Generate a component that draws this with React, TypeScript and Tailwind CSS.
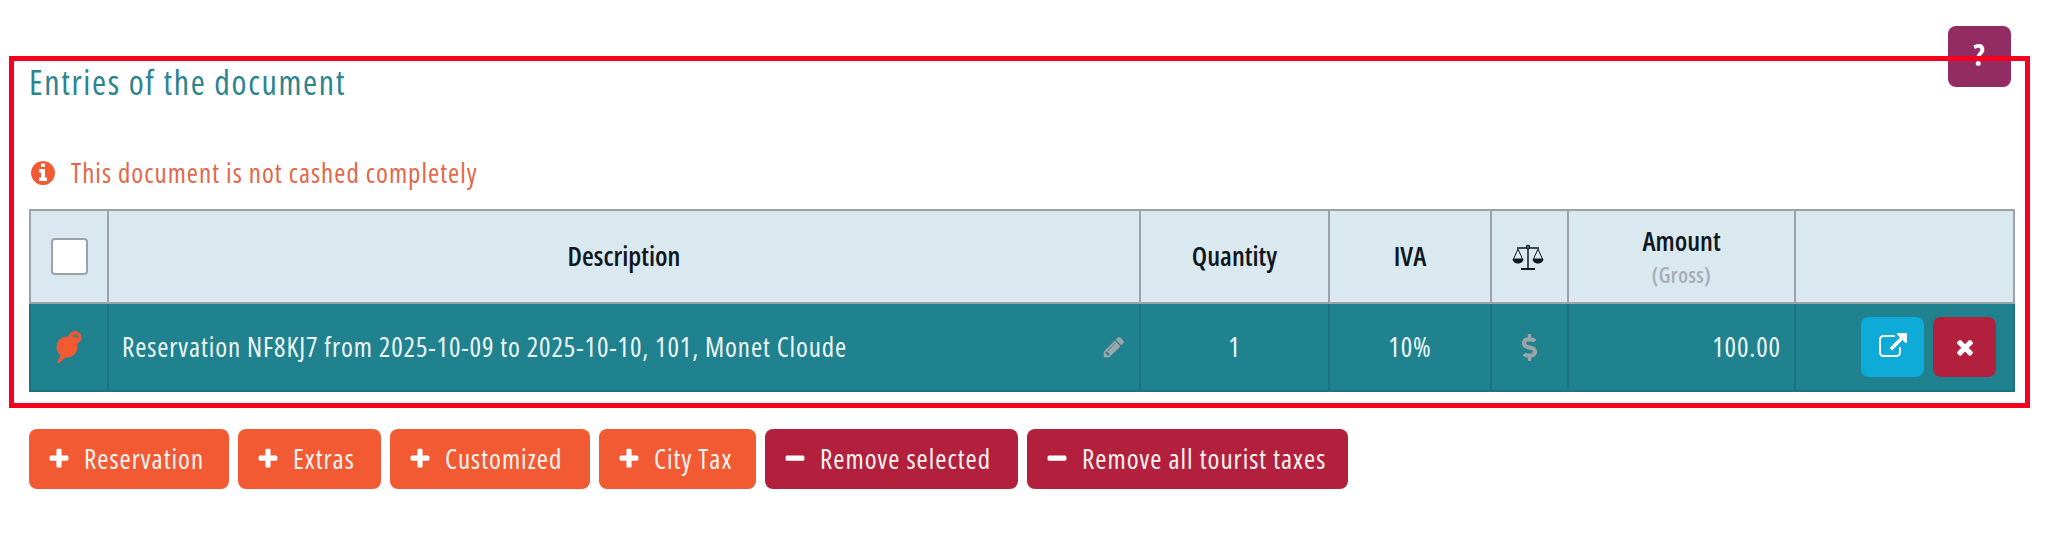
import { FaDollarSign } from "react-icons/fa";

const PLUS =
  "M1600 736v192q0 40-28 68t-68 28h-416v416q0 40-28 68t-68 28h-192q-40 0-68-28t-28-68v-416h-416q-40 0-68-28t-28-68v-192q0-40 28-68t68-28h416v-416q0-40 28-68t68-28h192q40 0 68 28t28 68v416h416q40 0 68 28t28 68z";
const MINUS =
  "M1600 736v192q0 40-28 68t-68 28h-1216q-40 0-68-28t-28-68v-192q0-40 28-68t68-28h1216q40 0 68 28t28 68z";
const TIMES =
  "M1490 1322q0 40-28 68l-136 136q-28 28-68 28t-68-28l-294-294-294 294q-28 28-68 28t-68-28l-136-136q-28-28-28-68t28-68l294-294-294-294q-28-28-28-68t28-68l136-136q28-28 68-28t68 28l294 294 294-294q28-28 68-28t68 28l136 136q28 28 28 68t-28 68l-294 294 294 294q28 28 28 68z";
const LINK =
  "M1408 928v320q0 119-84.500 203.500t-203.500 84.500h-832q-119 0-203.500-84.500t-84.500-203.500v-832q0-119 84.500-203.500t203.500-84.500h704q14 0 23 9t9 23v64q0 14-9 23t-23 9h-704q-66 0-113 47t-47 113v832q0 66 47 113t113 47h832q66 0 113-47t47-113v-320q0-14 9-23t23-9h64q14 0 23 9t9 23zm384-864v512q0 26-19 45t-45 19-45-19l-176-176-652 652q-10 10-23 10t-23-10l-114-114q-10-10-10-23t10-23l652-652-176-176q-19-19-19-45t19-45 45-19h512q26 0 45 19t19 45z";
const PENCIL =
  "M491 1536l91-91-235-235-91 91v107h128v128h107zm523-928q0-22-22-22-10 0-17 7l-542 542q-7 7-7 17 0 22 22 22 10 0 17-7l542-542q7-7 7-17zm-54-192l416 416-832 832h-416v-416zm683 96q0 53-37 90l-166 166-416-416 166-165q36-38 90-38 53 0 91 38l235 234q37 39 37 91z";
const INFO =
  "M1152 1376v-160q0-14-9-23t-23-9h-96v-512q0-14-9-23t-23-9h-320q-14 0-23 9t-9 23v160q0 14 9 23t23 9h96v320h-96q-14 0-23 9t-9 23v160q0 14 9 23t23 9h448q14 0 23-9t9-23zm-128-896v-160q0-14-9-23t-23-9h-192q-14 0-23 9t-9 23v160q0 14 9 23t23 9h192q14 0 23-9t9-23zm640 416q0 209-103 385.500t-279.500 279.500-385.500 103-385.500-103-279.500-279.500-103-385.500 103-385.500 279.500-279.500 385.500-103 385.500 103 279.500 279.500 103 385.500z";

function Glyph(props: { d: string; className: string }) {
  return (
    <svg viewBox="0 0 1792 1792" fill="currentColor" className={props.className}>
      <path d={props.d} />
    </svg>
  );
}

function PinIcon() {
  return (
    <svg viewBox="0 0 26 32" className="h-8 w-[26px]">
      <path d="M5 24 L1 31.500 L3.500 32 L10 26 Z" fill="#f25a34" />
      <ellipse cx="11" cy="16" rx="10.500" ry="10.500" fill="#f25a34" />
      <path d="M12 9 L15 4 L22 12 L18 17 Z" fill="#f25a34" />
      <circle cx="19" cy="6.500" r="6.500" fill="#f25a34" />
      <ellipse cx="19.500" cy="5" rx="3" ry="2" fill="#20828e" opacity="0.55" />
    </svg>
  );
}

function ScaleIcon() {
  return (
    <svg viewBox="0 0 32 26" className="mx-auto h-7 w-8 -translate-x-0.5 text-[#0f1720]" fill="none" stroke="currentColor" strokeWidth="1.500">
      <path d="M5 4 H27 M16 4 V24" />
      <path d="M9 25 H23" strokeWidth="2" />
      <circle cx="16" cy="3" r="1.500" fill="#dae8ef" />
      <path d="M6 5 L1.500 15 H10.500 Z M26 5 L21.500 15 H30.500 Z" strokeWidth="1" />
      <path d="M0.500 15 H11.500 C11 21 1 21 0.500 15 Z M20.500 15 H31.500 C31 21 21 21 20.500 15 Z" fill="currentColor" stroke="none" />
    </svg>
  );
}

const actions = [
  { label: "Reservation", icon: PLUS, width: "w-[200px]", color: "bg-[#f25a34]" },
  { label: "Extras", icon: PLUS, width: "w-[143px]", color: "bg-[#f25a34]" },
  { label: "Customized", icon: PLUS, width: "w-[200px]", color: "bg-[#f25a34]" },
  { label: "City Tax", icon: PLUS, width: "w-[157px]", color: "bg-[#f25a34]" },
  { label: "Remove selected", icon: MINUS, width: "w-[253px]", color: "bg-[#b3203e]" },
  { label: "Remove all tourist taxes", icon: MINUS, width: "w-[321px]", color: "bg-[#b3203e]" },
];

const th = "border-2 border-[#9ca3a8] bg-[#dae8ef] text-center font-semibold tracking-normal text-[#0f1720]";
const td = "border-2 border-[#1b737f] text-center text-[#eef7f8]";

export default function App() {
  return (
    <div className="relative h-[544px] w-[2048px] overflow-hidden bg-white pl-[9px] pt-[56px] font-['Open_Sans',sans-serif] font-stretch-[75%] tracking-[0.9px]">
      <button className="absolute left-[1948px] top-[26px] flex h-[61px] w-[63px] items-start justify-center rounded-lg bg-[#932c62] pt-[13px] text-[30px] font-bold leading-8 text-white">
        ?
      </button>

      <section className="relative h-[352px] w-[2021px] border-[5px] border-[#f5001e] pl-[15px]">
        <h2 className="text-[34px] leading-[42px] tracking-[1.65px] text-[#2b8490]">Entries of the document</h2>

        <p className="mt-[54px] flex h-8 items-center text-[27px] tracking-[1px] text-[#e4674a]">
          <Glyph d={INFO} className="mr-[14px] h-7 w-7 text-[#f25a34]" />
          This document is not cashed completely
        </p>

        <table className="mt-[20px] w-[1984px] table-fixed border-collapse text-[27px]">
          <colgroup>
            <col className="w-[78px]" />
            <col className="w-[1032px]" />
            <col className="w-[189px]" />
            <col className="w-[162px]" />
            <col className="w-[77px]" />
            <col className="w-[227px]" />
            <col className="w-[219px]" />
          </colgroup>
          <thead>
            <tr className="h-[93px]">
              <th className={th}>
                <span className="mx-auto block h-[37px] w-[37px] rounded-[4px] border-2 border-[#9ca3a8] bg-white" />
              </th>
              <th className={th}>Description</th>
              <th className={th}>Quantity</th>
              <th className={th}>IVA</th>
              <th className={th}>
                <ScaleIcon />
              </th>
              <th className={th}>
                <div className="mb-[3px] leading-[34px]">Amount</div>
                <div className="text-[21px] leading-7 tracking-[0.5px] text-[#a4adb5]">(Gross)</div>
              </th>
              <th className={th} />
            </tr>
          </thead>
          <tbody>
            <tr className="h-[88px] bg-[#20828e]">
              <td className={td}>
                <span className="flex justify-center">
                  <PinIcon />
                </span>
              </td>
              <td className={td + " px-[13px]"}>
                <div className="flex items-center justify-between text-left">
                  <span>Reservation NF8KJ7 from 2025-10-09 to 2025-10-10, 101, Monet Cloude</span>
                  <Glyph d={PENCIL} className="h-6 w-6 text-[#9aa6a8]" />
                </div>
              </td>
              <td className={td}>1</td>
              <td className={td}>10%</td>
              <td className={td}>
                <FaDollarSign className="mx-auto text-[27px] text-[#9aa6a8]" />
              </td>
              <td className={td + " pr-[13px] text-right"}>100.00</td>
              <td className={td}>
                <div className="flex justify-end gap-[9px] pr-[17px]">
                  <button className="flex h-[60px] w-[63px] items-center justify-center rounded-lg bg-[#0fabd8] text-white">
                    <Glyph d={LINK} className="h-7 w-7" />
                  </button>
                  <button className="flex h-[60px] w-[63px] items-center justify-center rounded-lg bg-[#b3203e] text-white">
                    <Glyph d={TIMES} className="h-6 w-6" />
                  </button>
                </div>
              </td>
            </tr>
          </tbody>
        </table>
      </section>

      <div className="ml-[20px] mt-[21px] flex gap-[9px]">
        {actions.map((action) => (
          <button
            key={action.label}
            className={`flex h-[60px] items-center gap-[13px] rounded-lg pl-[18px] text-[27px] tracking-[1px] text-[#fdf3ef] ${action.width} ${action.color}`}
          >
            <Glyph d={action.icon} className="h-6 w-6 text-white" />
            {action.label}
          </button>
        ))}
      </div>
    </div>
  );
}
